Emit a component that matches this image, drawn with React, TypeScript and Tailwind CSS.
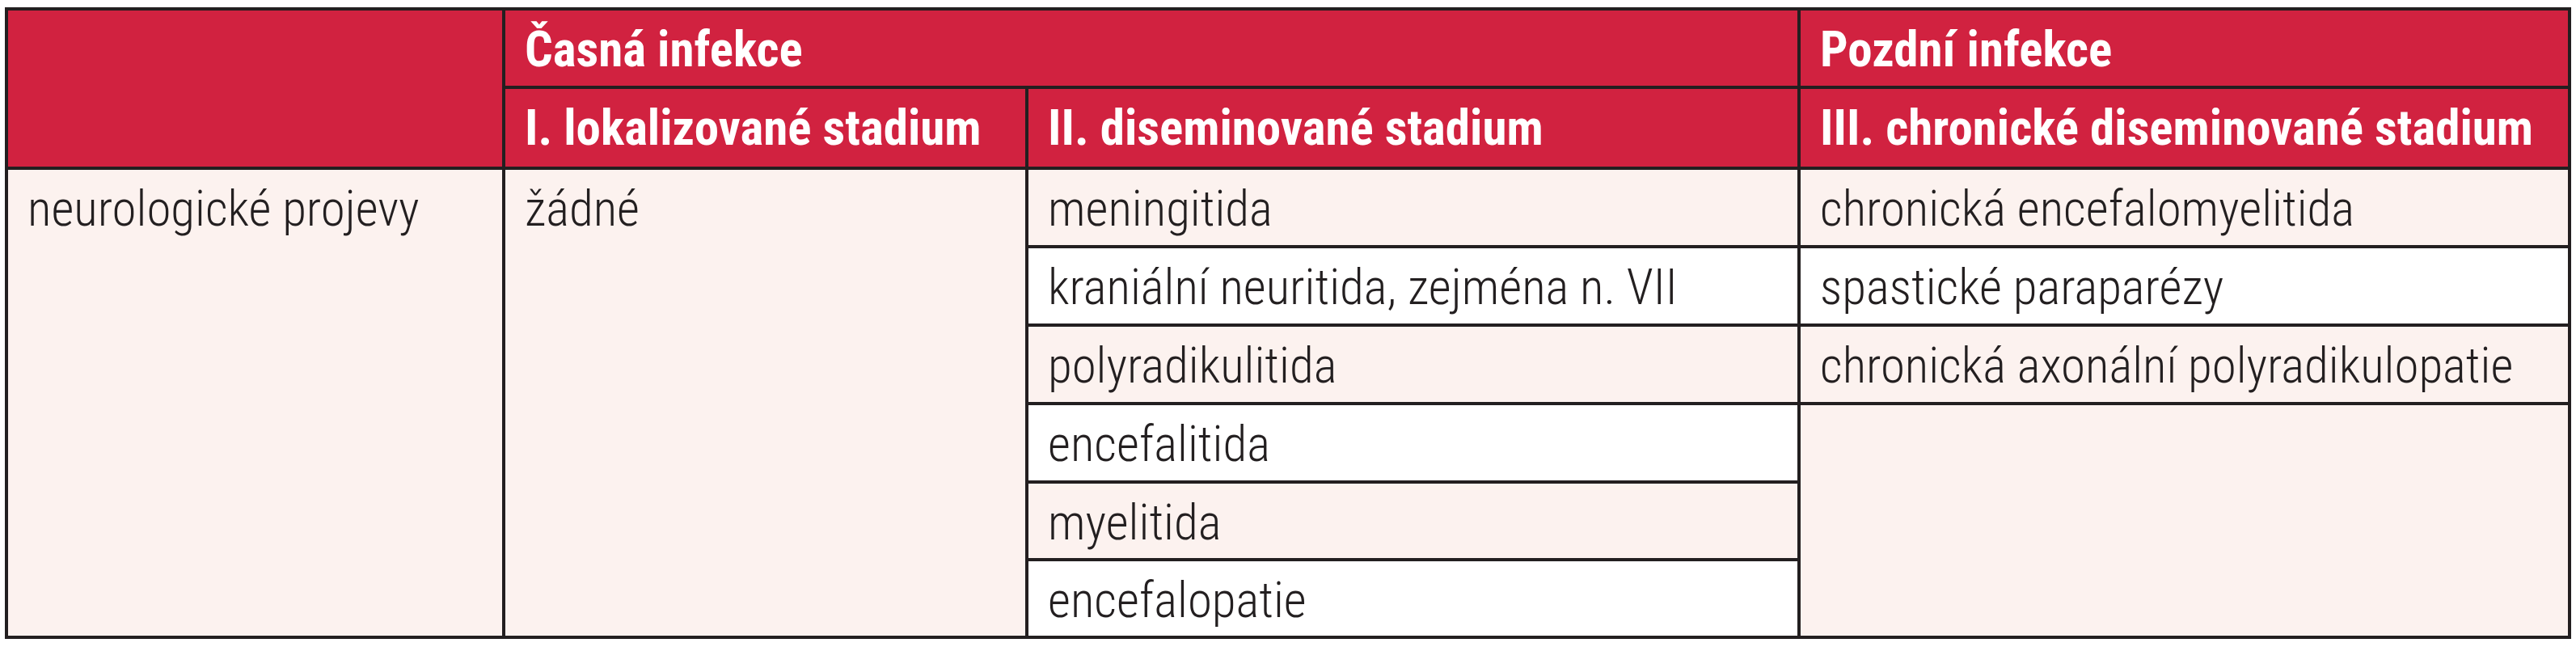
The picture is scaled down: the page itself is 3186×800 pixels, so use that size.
import React from "react";

const cell = "border-4 border-[#231f20] align-top pl-[24px] pt-[18px] pr-2";
const head = `${cell} bg-[#d12240] text-white font-bold`;
const pink = `${cell} bg-[#fcf2ef]`;
const white = `${cell} bg-white`;

export default function App() {
  return (
    <div className="w-[3186px] h-[800px] bg-white pt-[9px] pl-[6px]">
      <table className="table-fixed border-collapse w-[3170px] font-['Roboto',sans-serif] [font-stretch:75%] text-[61px] leading-[61px] font-light text-[#231f20]">
        <colgroup>
          <col className="w-[615px]" />
          <col className="w-[647px]" />
          <col className="w-[955px]" />
          <col className="w-[953px]" />
        </colgroup>
        <thead>
          <tr className="h-[97px]">
            <th rowSpan={2} className={head}></th>
            <th colSpan={2} className={`${head} text-left`}>Časná infekce</th>
            <th className={`${head} text-left`}>Pozdní infekce</th>
          </tr>
          <tr className="h-[100px]">
            <th className={`${head} text-left`}>I. lokalizované stadium</th>
            <th className={`${head} text-left`}>II. diseminované stadium</th>
            <th className={`${head} text-left`}>III. chronické diseminované stadium</th>
          </tr>
        </thead>
        <tbody>
          <tr className="h-[97px]">
            <td rowSpan={6} className={pink}>neurologické projevy</td>
            <td rowSpan={6} className={pink}>žádné</td>
            <td className={pink}>meningitida</td>
            <td className={pink}>chronická encefalomyelitida</td>
          </tr>
          <tr className="h-[97px]">
            <td className={white}>kraniální neuritida, zejména n. VII</td>
            <td className={white}>spastické paraparézy</td>
          </tr>
          <tr className="h-[97px]">
            <td className={pink}>polyradikulitida</td>
            <td className={pink}>chronická axonální polyradikulopatie</td>
          </tr>
          <tr className="h-[97px]">
            <td className={white}>encefalitida</td>
            <td rowSpan={3} className={pink}></td>
          </tr>
          <tr className="h-[96px]">
            <td className={pink}>myelitida</td>
          </tr>
          <tr className="h-[96px]">
            <td className={white}>encefalopatie</td>
          </tr>
        </tbody>
      </table>
    </div>
  );
}
